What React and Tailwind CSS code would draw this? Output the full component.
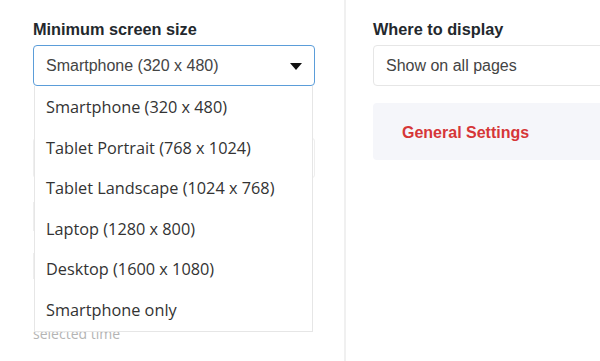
const options = [
  'Smartphone (320 x 480)',
  'Tablet Portrait (768 x 1024)',
  'Tablet Landscape (1024 x 768)',
  'Laptop (1280 x 800)',
  'Desktop (1600 x 1080)',
  'Smartphone only',
];

const Caret = () => (
  <svg width="12" height="7" viewBox="0 0 12 7" className="absolute right-[13px] top-[18px]">
    <path d="M0 0h12L6 7z" fill="#111" />
  </svg>
);

export default function App() {
  return (
    <div className="w-[600px] h-[361px] overflow-hidden bg-white flex font-['Liberation_Sans',Arial,sans-serif]">
      {/* Left column */}
      <div className="w-[344px] shrink-0 pl-[33px] pr-[29px] pt-[18px] relative">
        <h3 className="text-[16.3px] font-bold text-[#23282d] leading-[22px]">Minimum screen size</h3>
        <div className="relative mt-[5px]">
          <div className="h-[41px] border border-[#5b9dd9] rounded-[4px] flex items-center pl-[12px] text-[16px] text-[#444]">
            Smartphone (320 x 480)
          </div>
          <Caret />

          {/* fields hidden behind the open list */}
          <div className="mt-[52px] h-[40px] border border-[#eee] rounded-[3px]" />
          <div className="mt-[24px] h-[29px] border-l border-[#eee]" />
          <div className="mt-[22px] h-[26px] border-l border-[#eee]" />
          <p className="mt-[46px] text-[14px] text-[#b4b4b4] font-['Open_Sans',sans-serif] leading-[18px]">selected time</p>

          {/* open list */}
          <ul className="absolute left-[1px] right-[2px] top-[41px] bg-white border border-[#e6e6e6] border-t-0 pt-[1px] font-['Open_Sans',sans-serif] text-[16.3px] text-[#333]">
            {options.map((o) => (
              <li key={o} className="h-[40.6px] flex items-center pl-[11px]">{o}</li>
            ))}
          </ul>
        </div>
      </div>

      {/* Divider */}
      <div className="w-[2px] shrink-0 bg-[#f0f0f0]" />

      {/* Right column */}
      <div className="flex-1 pl-[27px] pt-[18px] min-w-0">
        <h3 className="text-[16.3px] font-bold text-[#23282d] leading-[22px] whitespace-nowrap">Where to display</h3>
        <div className="mt-[5px] h-[41px] w-[260px] border border-[#e6e6e6] rounded-[4px] flex items-center pl-[12px] text-[16px] text-[#444] whitespace-nowrap">
          Show on all pages
        </div>
        <div className="mt-[17px] h-[57px] w-[260px] bg-[#f5f6fa] rounded-[4px] flex items-center pl-[29px] pt-[2px]">
          <span className="text-[16px] font-bold text-[#d63638] whitespace-nowrap">General Settings</span>
        </div>
      </div>
    </div>
  );
}
